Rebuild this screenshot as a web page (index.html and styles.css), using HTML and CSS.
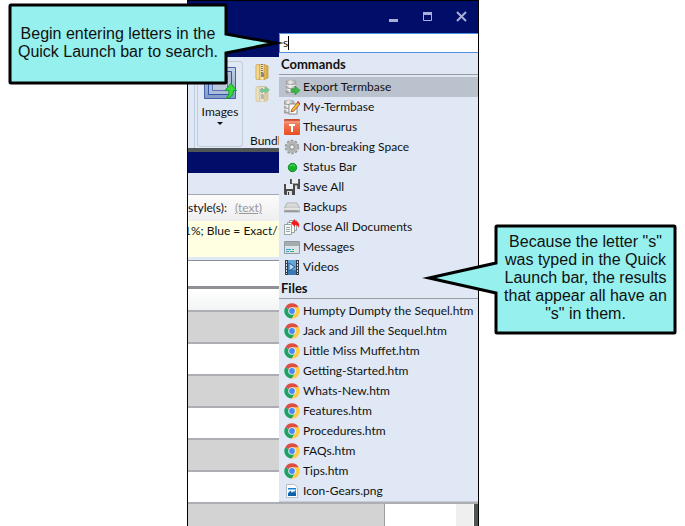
FILE: index.html
```html
<!DOCTYPE html>
<html lang="en">
<head>
<meta charset="utf-8">
<title>Quick Launch</title>
<link rel="stylesheet" href="styles.css">
</head>
<body>
<svg class="defs" aria-hidden="true">
  <defs>
    <linearGradient id="metal" x1="0" x2="1" y1="0" y2="0"><stop offset="0" stop-color="#999"/><stop offset=".4" stop-color="#f2f2f2"/><stop offset="1" stop-color="#a5a5a5"/></linearGradient>
    <linearGradient id="red" x1="0" x2="0" y1="0" y2="1"><stop offset="0" stop-color="#c8452a"/><stop offset=".25" stop-color="#f08062"/><stop offset="1" stop-color="#e84a20"/></linearGradient>
    <linearGradient id="steel" x1="0" x2="0" y1="0" y2="1"><stop offset="0" stop-color="#c9d2e2"/><stop offset="1" stop-color="#8299c4"/></linearGradient>
    <linearGradient id="drive" x1="0" x2="0" y1="0" y2="1"><stop offset="0" stop-color="#e6e6e6"/><stop offset="1" stop-color="#b4b4b4"/></linearGradient>
    <linearGradient id="gold" x1="0" x2="1" y1="0" y2="0"><stop offset="0" stop-color="#f8e29a"/><stop offset="1" stop-color="#dba93c"/></linearGradient>
    <symbol id="database" viewBox="0 0 16 16">
      <path d="M2 2q5-2 10 0v12q-5 2-10 0z" fill="url(#metal)" stroke="#a8a8a8" stroke-width=".6"/>
      <path d="M2 5q5 1.500 10 0M2 9q5 1.500 10 0M2 13q5 1.500 10 0" fill="none" stroke="#8e8e8e" stroke-width=".8"/>
      <path d="M2 6q5 1.500 10 0M2 10q5 1.500 10 0" fill="none" stroke="#fff" stroke-width=".8"/>
    </symbol>
    <symbol id="floppy" viewBox="0 0 11 11">
      <path d="M0 0h11v11H1L0 10z" fill="#4a4a4a"/>
      <path d="M2 0h7v5H2z" fill="#e9edf2"/><path d="M3 7h5v4H3z" fill="#ddd"/><path d="M4 8h1v3H4z" fill="#333"/>
    </symbol>
    <symbol id="chrome" viewBox="0 0 16 16">
      <path d="M8 8 1.300 4.200A7.600 7.600 0 0 1 14.700 4.300z" fill="#dd4f43"/>
      <path d="M8 8 1.300 4.200A7.600 7.600 0 0 0 7.800 15.600L11.300 9.700z" fill="#1da261"/>
      <path d="M8 4.300h6.700A7.600 7.600 0 0 1 7.800 15.600L11.300 9.700z" fill="#ffcd41"/>
      <circle cx="8" cy="8" r="3.800" fill="#f1f1f1"/><circle cx="8" cy="8" r="2.900" fill="#4a89f3"/>
    </symbol>
    <symbol id="zip" viewBox="0 0 16 16">
      <path d="M2 1 6 0v16l-4-1zM9 0l5 2v12l-5 2z" fill="url(#gold)" stroke="#c49535" stroke-width=".7"/>
      <path d="M6 0h4v16H6z" fill="#f7e8b5" stroke="#b98a2c" stroke-width=".5"/>
      <path d="M8 0v9" stroke="#777" stroke-width="2" stroke-dasharray="1 1"/><path d="M7 9h3v4H7z" fill="#888"/>
    </symbol>
  </defs>
</svg>

<main class="stage">
  <section class="window">
    <header class="titlebar">
      <button aria-label="Minimize"><svg viewBox="0 0 11 11"><path d="M1 8h9v3H1z" fill="#a9afd6"/></svg></button>
      <button aria-label="Maximize"><svg viewBox="0 0 11 11"><path d="M1.500 1.500h8v8h-8z" fill="none" stroke="#a9afd6"/><path d="M1 1h9v3H1z" fill="#a9afd6"/></svg></button>
      <button aria-label="Close"><svg viewBox="0 0 11 11"><path d="m1 1 9 9m0-9-9 9" fill="none" stroke="#a9afd6" stroke-width="2"/></svg></button>
    </header>

    <div class="ribbon">
      <button class="images">
        <svg viewBox="0 0 34 34">
          <path d="M1.500 1.500h31v31h-31z" fill="url(#steel)" stroke="#4463ac"/>
          <path d="M5.500 5.500h23v23h-23z" fill="#adbdd7" stroke="#3156b0"/>
          <path d="M9.500 9.500h15v15h-15z" fill="#bdcade" stroke="#5b76b4"/>
          <path d="M23 32.500q4-3 3-8h-4l6-7 5.500 7h-3q0 7-7.500 8z" fill="#37dc3b" stroke="#189c2a"/>
        </svg>
        <span>Images</span>
        <i class="arrow"></i>
      </button>
      <div class="bundle">
        <svg viewBox="0 0 16 16"><use href="#zip"/></svg>
        <svg viewBox="0 0 16 16"><g opacity=".5"><use href="#zip"/></g><path d="M6 3h5V0l5 4-5 4V6H6z" fill="#79c795"/></svg>
        <span>Bundl</span>
      </div>
    </div>
    <div class="divider"></div>
    <div class="tabstrip"></div>
    <div class="subbar"></div>
    <div class="stylebar"><span>style(s):</span><a href="#text">(text)</a></div>
    <div class="notice">1%; Blue = Exact/1</div>
    <div class="field"></div>
    <div class="gridhead"></div>
    <div class="rows">
      <div></div><div></div><div></div><div></div><div></div><div></div>
    </div>
    <div class="foot"><div class="cell"></div><div class="track"></div></div>

    <aside class="launch">
      <div class="search"><input type="text" value="s" aria-label="Quick Launch"><i class="caret"></i></div>
      <h2>Commands</h2>
      <ul>
        <li><button class="active"><svg viewBox="0 0 16 16"><use href="#database"/><path d="M7 10h4V7l5 4.500-5 4.500v-3H7z" fill="#38bd44" stroke="#1b962f" stroke-width=".6"/></svg>Export Termbase</button></li>
        <li><button><svg viewBox="0 0 16 16"><use href="#database" x="-2"/><path d="M5 5h8v10H5z" fill="#fff" stroke="#888"/><path d="m7 13 1-3 6-7 2 2-6 7z" fill="#f1c232" stroke="#a33c2c" stroke-width=".8"/><path d="m13 3 1-1 2 2-1 1z" fill="#d33"/></svg>My-Termbase</button></li>
        <li><button><svg viewBox="0 0 16 16"><rect width="16" height="16" rx="1" fill="url(#red)"/><path d="M0 3h16" stroke="#ffb39a"/><path d="M5 6h6M8 6v7" stroke="#fff" stroke-width="2"/></svg>Thesaurus</button></li>
        <li><button><svg viewBox="0 0 16 16"><circle cx="8" cy="8" r="6" fill="none" stroke="#999" stroke-width="2.500" stroke-dasharray="2.400 1.370"/><circle cx="8" cy="8" r="4" fill="none" stroke="#b4b4b4" stroke-width="4"/><circle cx="8" cy="8" r="2.300" fill="#eef1f5" stroke="#888"/></svg>Non-breaking Space</button></li>
        <li><button><svg viewBox="0 0 16 16"><circle cx="8.500" cy="8.500" r="4.200" fill="#13b52b" stroke="#158d28"/><path d="M6 7q2.500-2.500 5 0" fill="none" stroke="#62dc6d"/></svg>Status Bar</button></li>
        <li><button><svg viewBox="0 0 16 16"><use href="#floppy" x="6" y="0" width="10" height="10"/><use href="#floppy" x="0" y="5" width="11" height="11"/></svg>Save All</button></li>
        <li><button><svg viewBox="0 0 16 16"><path d="M3 4h10l3 6v3H0v-3z" fill="url(#drive)" stroke="#999" stroke-width=".7"/><path d="M0 10h16" stroke="#fff"/><path d="M1 12h13" stroke="#888"/></svg>Backups</button></li>
        <li><button><svg viewBox="0 0 16 16"><g fill="#f5f8f7" stroke="#82938d" stroke-width=".8"><path d="M5.500 1.500h7v10h-7z"/><path d="M3.500 3.500h7v10h-7z"/><path d="M.5 5.500h7v10h-7z"/><path d="M2 8.500h4M2 10.500h4M2 12.500h4"/></g><path d="m7 4 4-4v2q5 0 4 7-1-3-4-3v2z" fill="#f31919"/></svg>Close All Documents</button></li>
        <li><button><svg viewBox="0 0 16 16"><path d="M.5 2.500h15v12H.5z" fill="#dce3e6" stroke="#929b9e"/><path d="M1 3h14v4H1z" fill="#a5acae"/><path d="M2 10.500h5M2 12.500h3" stroke="#29a9df"/><path d="M8 10.500h2M6 12.500h4" stroke="#3bb864"/></svg>Messages</button></li>
        <li><button><svg viewBox="0 0 16 16"><path d="M1 1h14v15H1z" fill="#343d46"/><path d="M4 1h8v15H4z" fill="#65a5d8"/><path d="M4 11h8v5H4z" fill="#3c79b4"/><path d="M2.500 2v13M13.500 2v13" stroke="#d7dde2" stroke-dasharray="2 1"/><path d="m5 4 6 4-6 4z" fill="#b6dbf7" stroke="#235a92"/></svg>Videos</button></li>
      </ul>
      <h2>Files</h2>
      <ul>
        <li><button><svg><use href="#chrome"/></svg>Humpty Dumpty the Sequel.htm</button></li>
        <li><button><svg><use href="#chrome"/></svg>Jack and Jill the Sequel.htm</button></li>
        <li><button><svg><use href="#chrome"/></svg>Little Miss Muffet.htm</button></li>
        <li><button><svg><use href="#chrome"/></svg>Getting-Started.htm</button></li>
        <li><button><svg><use href="#chrome"/></svg>Whats-New.htm</button></li>
        <li><button><svg><use href="#chrome"/></svg>Features.htm</button></li>
        <li><button><svg><use href="#chrome"/></svg>Procedures.htm</button></li>
        <li><button><svg><use href="#chrome"/></svg>FAQs.htm</button></li>
        <li><button><svg><use href="#chrome"/></svg>Tips.htm</button></li>
        <li><button><svg viewBox="0 0 16 16"><path d="M2.500 1.500h8l3 3v10h-11z" fill="#fff" stroke="#b8bdc3"/><path d="M4 5h8v8H4z" fill="#1683d8"/><path d="m4 11 3-3 2 2 1-1 2 2v2H4z" fill="#0b5ea8"/><path d="M4 6.500h8L10 9 9 8 8 10 6.500 7.500 4 10z" fill="#fff"/></svg>Icon-Gears.png</button></li>
      </ul>
    </aside>
  </section>

  <div class="callout first">
    <svg viewBox="0 0 276 83"><path d="M3 2h214q1 0 1 1v28l50 9-50 10v29q0 1-1 1H3q-1 0-1-1V3q0-1 1-1z" fill="#96f0ee" stroke="#000" stroke-width="3" stroke-miterlimit="12"/></svg>
    <p>Begin entering letters in the Quick Launch bar to search.</p>
  </div>
  <div class="callout second">
    <svg viewBox="0 0 256 112"><path d="M75 2h177q1 0 1 1v105q0 1-1 1H75q-1 0-1-1V69L7 54l67-15V3q0-1 1-1z" fill="#96f0ee" stroke="#000" stroke-width="3" stroke-miterlimit="12"/></svg>
    <p>Because the letter "s" was typed in the Quick Launch bar, the results that appear all have an "s" in them.</p>
  </div>
</main>
</body>
</html>
```
FILE: styles.css
```css
* { box-sizing: border-box; }
body {
  margin: 0;
  background: #fff;
  color: #111;
  font: 12px/20px Lato, "Open Sans", sans-serif;
}
button {
  margin: 0;
  padding: 0;
  border: 0;
  background: none;
  color: inherit;
  font: inherit;
}
svg { display: block; flex: none; }
.defs { position: absolute; width: 0; height: 0; }

.stage {
  position: relative;
  display: grid;
  grid-template-columns: 187px minmax(292px, 1fr) 206px;
}
.window {
  position: relative;
  grid-column: 2;
  overflow: hidden;
  border: 1px solid #000;
  background: #dfe8f4;
}

.titlebar {
  display: flex;
  justify-content: flex-end;
  gap: 23px;
  height: 56px;
  padding: 10px 11px 0 0;
  background: #000e6a;
}
.titlebar button { width: 11px; height: 11px; }
.titlebar svg { width: 11px; height: 11px; }

.ribbon {
  display: flex;
  gap: 7px;
  height: 91px;
  margin-left: 6px;
  padding: 4px 0 1px 2px;
  border-left: 1px solid #bccbdd;
}
.images {
  display: flex;
  flex-direction: column;
  align-items: center;
  width: 46px;
  padding-top: 4px;
  border: 1px solid #c3ccd9;
  border-radius: 3px;
}
.images svg { width: 34px; height: 34px; }
.images span { margin-top: 2px; }
.arrow {
  border: 3px solid transparent;
  border-top-color: #111;
}
.bundle {
  display: flex;
  flex-direction: column;
  gap: 6px;
  padding-top: 3px;
}
.bundle svg { width: 16px; height: 16px; margin-left: 4px; }
.bundle span { margin-top: auto; margin-bottom: -4px; }

.divider { height: 4px; background: #505555; }
.tabstrip { height: 21px; background: #000e6a; }
.subbar { height: 22px; border-bottom: 1px solid #a3a8b0; }
.stylebar {
  display: flex;
  gap: 8px;
  height: 26px;
  padding-top: 3px;
  background: linear-gradient(#fbfbfb, #eee);
}
.stylebar a { color: #999; }
.notice {
  height: 36px;
  margin-left: -4px;
  background: #ffffe1;
  white-space: nowrap;
}
.field {
  height: 28px;
  margin-top: 3px;
  border: solid #8e9095;
  border-width: 1px 0 2px;
  background: #fff;
}
.gridhead {
  height: 24px;
  border-top: 1px solid #8e9095;
  border-bottom: 2px solid #adadb4;
  background: linear-gradient(#fff, #f3f4f5);
}
.rows div {
  height: 32px;
  border-bottom: 2px solid #adadb4;
  background: #fff;
}
.rows div:nth-child(odd) { background: #d3d3d3; }
.foot {
  display: flex;
  height: 22px;
  background: #fff;
  border-right: 4px solid #505555;
}
.cell {
  flex: 1;
  margin-right: 71px;
  border-right: 1px solid #9c9ca2;
  background: #d3d3d3;
}
.track { width: 18px; border-right: 1px solid #fff; background: #efefef; }

.launch {
  position: absolute;
  top: 32px;
  right: 0;
  width: 199px;
  border-bottom: 1px solid #c8cdd4;
  background: #dfe8f4;
}
.search { position: relative; }
.search input {
  display: block;
  width: 100%;
  height: 20px;
  padding: 0 3px;
  border: 1px solid #4a90dc;
  border-right: 0;
  outline: 0;
  background: #fff;
  color: #111;
  font: inherit;
}
.caret {
  position: absolute;
  top: 3px;
  left: 9px;
  width: 1px;
  height: 14px;
  background: #000;
}
.launch h2 {
  height: 22px;
  margin: 0 0 2px;
  padding-left: 2px;
  border-bottom: 1px solid #9a9ca0;
  font-size: 13px;
  line-height: 22px;
}
.launch ul { margin: 0; padding: 0; list-style: none; }
.launch li button {
  display: flex;
  align-items: center;
  gap: 3px;
  width: 100%;
  height: 20px;
  padding-left: 5px;
  text-align: left;
  white-space: nowrap;
}
.launch li svg { width: 16px; height: 16px; }
.launch .active { background: #bac2ce; }

.callout {
  position: absolute;
  font: 16px/18px "Liberation Sans", Arial, sans-serif;
  text-align: center;
}
.callout svg { position: absolute; inset: 0; width: 100%; height: 100%; }
.callout p { position: relative; margin: 0; }
.first {
  top: 3px;
  left: 8px;
  width: 276px;
  height: 83px;
  padding: 22px 60px 0 4px;
}
.second {
  top: 224px;
  right: 7px;
  width: 256px;
  height: 112px;
  padding: 9px 5px 0 76px;
}
```
